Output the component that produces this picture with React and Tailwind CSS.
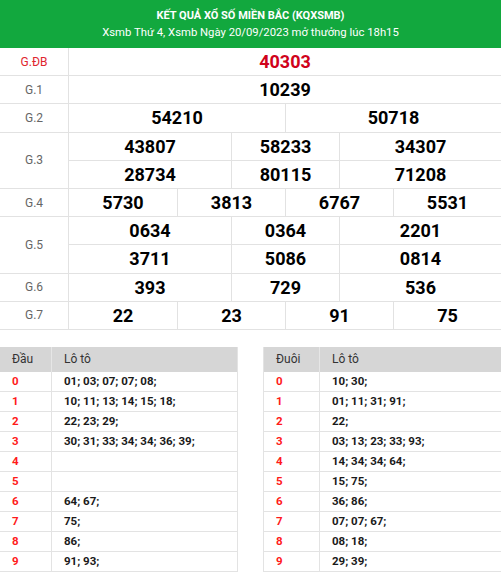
const prizes = [
  { label: "G.ĐB", red: true, rows: [[["40303", 8]]] },
  { label: "G.1", rows: [[["10239", 8]]] },
  { label: "G.2", rows: [[["54210", 4], ["50718", 4]]] },
  {
    label: "G.3",
    rows: [
      [["43807", 3], ["58233", 2], ["34307", 3]],
      [["28734", 3], ["80115", 2], ["71208", 3]],
    ],
  },
  { label: "G.4", rows: [[["5730", 2], ["3813", 2], ["6767", 2], ["5531", 2]]] },
  {
    label: "G.5",
    rows: [
      [["0634", 3], ["0364", 2], ["2201", 3]],
      [["3711", 3], ["5086", 2], ["0814", 3]],
    ],
  },
  { label: "G.6", rows: [[["393", 3], ["729", 2], ["536", 3]]] },
  { label: "G.7", rows: [[["22", 2], ["23", 2], ["91", 2], ["75", 2]]] },
];

const span = { 2: "col-span-2", 3: "col-span-3", 4: "col-span-4", 8: "col-span-8" };

const dau = [
  "01; 03; 07; 07; 08;",
  "10; 11; 13; 14; 15; 18;",
  "22; 23; 29;",
  "30; 31; 33; 34; 34; 36; 39;",
  "",
  "",
  "64; 67;",
  "75;",
  "86;",
  "91; 93;",
];

const duoi = [
  "10; 30;",
  "01; 11; 31; 91;",
  "22;",
  "03; 13; 23; 33; 93;",
  "14; 34; 34; 64;",
  "15; 75;",
  "36; 86;",
  "07; 07; 67;",
  "08; 18;",
  "29; 39;",
];

const LotoTable = ({ title, data, firstCol, className }) => (
  <div className={"w-[238px] " + className}>
    <div className="flex h-[25px] bg-[#d6d6d6] text-[12px] text-[#333]">
      <div className={firstCol + " flex items-center pl-3 border-r border-[#e6e6e6]"}>{title}</div>
      <div className="flex items-center pl-3">Lô tô</div>
    </div>
    {data.map((v, i) => (
      <div key={i} className="flex h-[20px] border-b border-[#e3e3e3] text-[11.5px]">
        <div className={firstCol + " flex items-center pl-3 border-r border-[#e3e3e3] font-bold text-[#ff1a1a]"}>
          {i}
        </div>
        <div className="flex items-center pl-3 font-bold text-[#1a1a1a]">{v}</div>
      </div>
    ))}
  </div>
);

export default function App() {
  return (
    <div className="w-[501px] bg-white font-['Roboto',sans-serif]">
      <div className="h-[48px] bg-[#12a83e] text-white flex flex-col items-center justify-center gap-[2px]">
        <div className="text-[11px] font-bold leading-[15px]">KẾT QUẢ XỔ SỐ MIỀN BẮC (KQXSMB)</div>
        <div className="text-[11.3px] leading-[15px]">Xsmb Thứ 4, Xsmb Ngày 20/09/2023 mở thưởng lúc 18h15</div>
      </div>
      <div>
        {prizes.map((p) => (
          <div key={p.label} className="flex">
            <div
              className={
                "w-[69px] shrink-0 flex items-center justify-center border-r border-b border-[#e2e2e2] text-[12px] " +
                (p.red ? "text-[#e0262e]" : "text-[#666]")
              }
            >
              {p.label}
            </div>
            <div className="flex-1 flex flex-col">
              {p.rows.map((row, ri) => (
                <div key={ri} className="grid grid-cols-8 h-[28.2px] border-b border-[#e2e2e2]">
                  {row.map(([n, s], ci) => (
                    <div
                      key={ci}
                      className={
                        span[s] +
                        " flex items-center justify-center text-[18px] font-bold " +
                        (ci > 0 ? "border-l border-[#e2e2e2] " : "") +
                        (p.red ? "text-[#d0021b]" : "text-black")
                      }
                    >
                      {n}
                    </div>
                  ))}
                </div>
              ))}
            </div>
          </div>
        ))}
      </div>
      <div className="flex justify-between mt-[17px]">
        <LotoTable title="Đầu" data={dau} firstCol="w-[52px]" className="border-r border-[#e3e3e3]" />
        <LotoTable title="Đuôi" data={duoi} firstCol="w-[56px]" className="border-l border-[#e3e3e3]" />
      </div>
    </div>
  );
}
